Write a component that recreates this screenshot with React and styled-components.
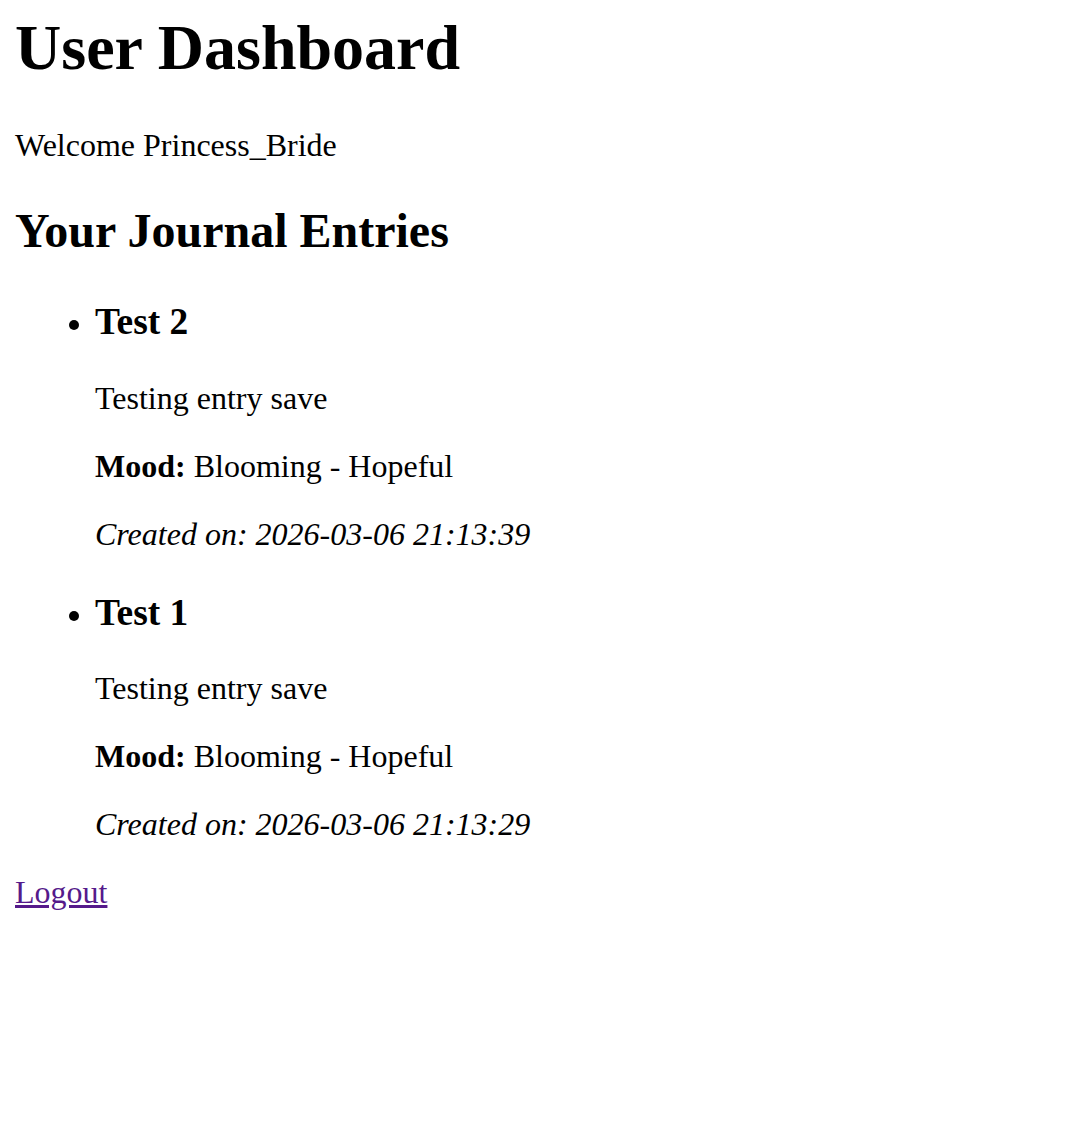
import styled, { createGlobalStyle } from "styled-components";

const entries = [
  { title: "Test 2", body: "Testing entry save", mood: "Blooming - Hopeful", created: "2026-03-06 21:13:39" },
  { title: "Test 1", body: "Testing entry save", mood: "Blooming - Hopeful", created: "2026-03-06 21:13:29" },
];

function App() {
  return (
    <>
      <GlobalStyle />
      <Page>
        <Title>User Dashboard</Title>
        <Text>Welcome Princess_Bride</Text>
        <SubTitle>Your Journal Entries</SubTitle>
        <EntryList>
          {entries.map((e) => (
            <Entry key={e.created}>
              <EntryTitle>{e.title}</EntryTitle>
              <Text>{e.body}</Text>
              <Text>
                <strong>Mood:</strong> {e.mood}
              </Text>
              <Text>
                <em>Created on: {e.created}</em>
              </Text>
            </Entry>
          ))}
        </EntryList>
        <LogoutLink href="#logout">Logout</LogoutLink>
      </Page>
    </>
  );
}

export default App;

const GlobalStyle = createGlobalStyle`
  html, body {
    margin: 0;
    padding: 0;
    background: #ffffff;
  }
  body {
    font-family: "Liberation Serif", "Times New Roman", serif;
    font-size: 32px;
    line-height: 1.125;
    color: #000000;
  }
`;

const Page = styled.div`
  padding: 0 16px 16px 15px;
`;

const Title = styled.h1`
  font-size: 64px;
  font-weight: 700;
  margin: 12px 0 43px;
`;

const Text = styled.p`
  margin: 32px 0;
`;

const SubTitle = styled.h2`
  font-size: 48px;
  font-weight: 700;
  margin: 41px 0 43px;
`;

const EntryList = styled.ul`
  margin: 32px 0;
  padding-left: 80px;
  list-style: disc;
`;

const Entry = styled.li``;

const EntryTitle = styled.h3`
  font-size: 37.44px;
  font-weight: 700;
  margin: 40px 0 36.5px;
`;

const LogoutLink = styled.a`
  color: #551a8b;
  text-decoration: underline;
`;
